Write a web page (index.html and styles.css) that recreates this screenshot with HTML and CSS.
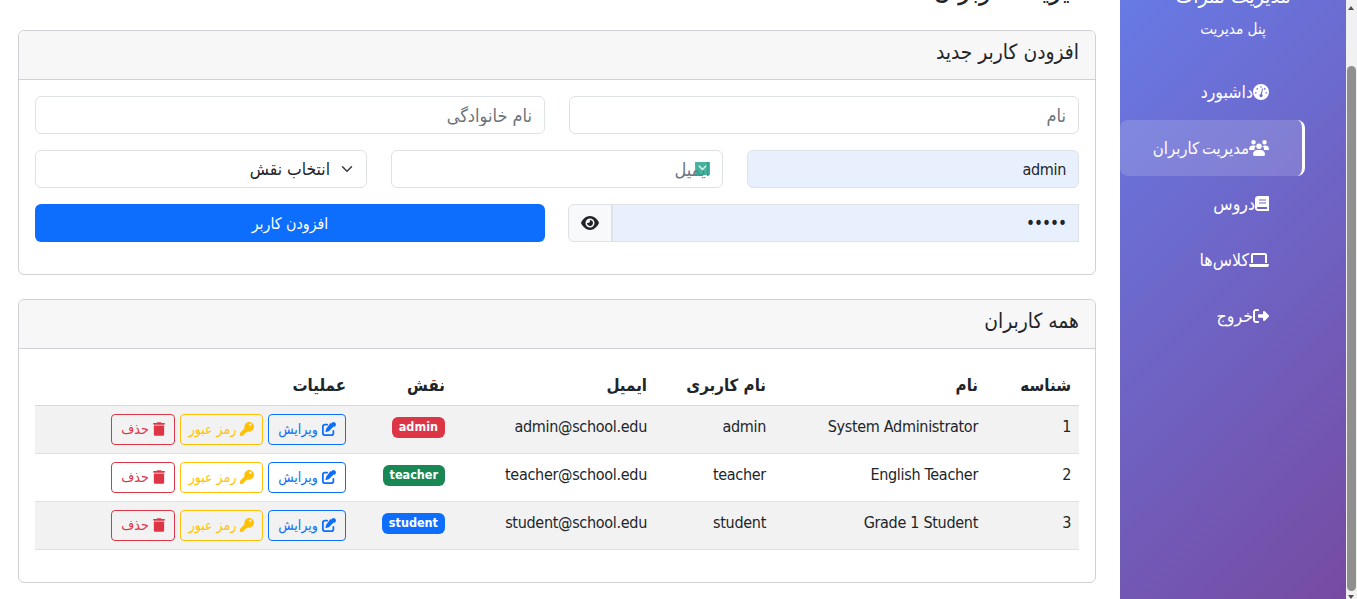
FILE: index.html
```html
<!DOCTYPE html>
<html lang="fa" dir="rtl">
<head>
<meta charset="utf-8">
<title>مدیریت کاربران</title>
<link rel="stylesheet" href="styles.css">
</head>
<body>
<div class="scrollbar"><span class="arrow up"></span><span class="thumb"></span><span class="arrow down"></span></div>
<div class="app">
  <aside class="sidebar">
    <div class="brand"><h4>مدیریت نمرات</h4><p>پنل مدیریت</p></div>
    <nav class="nav">
      <a class="nav-item"><svg class="ni" viewBox="0 0 512 512"><path fill="#fff" fill-rule="evenodd" d="M256 0a256 256 0 1 0 0 512 256 256 0 0 0 0-512zm0 70a26 26 0 1 1 0 52 26 26 0 0 1 0-52zM136 130a26 26 0 1 1 0 52 26 26 0 0 1 0-52zm240 0a26 26 0 1 1 0 52 26 26 0 0 1 0-52zM90 256a26 26 0 1 1 0 52 26 26 0 0 1 0-52zm332 0a26 26 0 1 1 0 52 26 26 0 0 1 0-52zM316 150l-28 176a50 50 0 1 1-40-8l44-172c6-18 28-14 24 4z"/></svg><span>داشبورد</span></a>
      <a class="nav-item active"><svg class="ni wide" viewBox="0 0 640 512"><path fill="#fff" d="M144 0a72 72 0 1 1 0 144 72 72 0 0 1 0-144zm352 0a72 72 0 1 1 0 144 72 72 0 0 1 0-144zM320 112a88 88 0 1 1 0 176 88 88 0 0 1 0-176zM0 288c0-62 50-112 112-112h48c22 0 42 6 60 16-26 24-44 60-44 96 0 12 2 22 4 32H16c-9 0-16-7-16-16zm480 0c0-36-18-72-44-96 18-10 38-16 60-16h32c62 0 112 50 112 112v16c0 9-7 16-16 16H476c2-10 4-20 4-32zM128 456c0-74 60-136 136-136h112c76 0 136 62 136 136 0 31-25 56-56 56H184c-31 0-56-25-56-56z"/></svg><span>مدیریت کاربران</span></a>
      <a class="nav-item"><svg class="ni narrow" viewBox="0 0 448 512"><path fill="#fff" fill-rule="evenodd" d="M96 0h320c18 0 32 14 32 32v448H96c-53 0-96-43-96-96V96C0 43 43 0 96 0zm32 112v32h224v-32H128zm0 96v32h224v-32H128zM64 384c0 18 14 32 32 32h288v-64H96c-18 0-32 14-32 32z"/></svg><span>دروس</span></a>
      <a class="nav-item"><svg class="ni wide" viewBox="0 0 640 512"><path fill="#fff" fill-rule="evenodd" d="M128 32h384c35 0 64 29 64 64v256h-64V96H128v256H64V96c0-35 29-64 64-64zM20 384h600c11 0 20 9 20 20 0 42-34 76-76 76H76c-42 0-76-34-76-76 0-11 9-20 20-20z"/></svg><span>کلاس‌ها</span></a>
      <a class="nav-item"><svg class="ni" viewBox="0 0 512 512"><path fill="#fff" d="M160 96H96c-18 0-32 14-32 32v256c0 18 14 32 32 32h64c18 0 32 14 32 32s-14 32-32 32H96c-53 0-96-43-96-96V128C0 75 43 32 96 32h64c18 0 32 14 32 32s-14 32-32 32zm344 137c12 13 12 33 0 46L376 407c-9 9-23 12-35 7s-20-17-20-30v-72H192c-18 0-32-14-32-32v-48c0-18 14-32 32-32h129v-72c0-13 8-25 20-30s26-2 35 7z"/></svg><span>خروج</span></a>
    </nav>
  </aside>
  <main class="content">
    <h2 class="page-title">مدیریت کاربران</h2>
    <section class="card">
      <div class="card-header">افزودن کاربر جدید</div>
      <div class="card-body add-form">
        <div class="row two">
          <input class="field" placeholder="نام">
          <input class="field" placeholder="نام خانوادگی">
        </div>
        <div class="row three">
          <input class="field filled latin" value="admin">
          <div class="email-wrap"><input class="field" placeholder="ایمیل"><svg class="autofill" viewBox="0 0 16 14"><rect width="16" height="14" fill="#2aa58f"/><path d="M4 4l4 4 4-4" fill="none" stroke="#d8f2ec" stroke-width="1.6"/></svg></div>
          <div class="select"><span>انتخاب نقش</span><svg class="chev" viewBox="0 0 16 16"><path d="M2 5l6 6 6-6" fill="none" stroke="#343a40" stroke-width="2" stroke-linecap="round" stroke-linejoin="round"/></svg></div>
        </div>
        <div class="row two">
          <div class="pw-group">
            <input class="field filled pw" type="password" value="admin">
            <button class="eye"><svg viewBox="0 0 576 512"><path fill="#212529" fill-rule="evenodd" d="M288 32C208 32 143 68 97 112 51 154 20 204 5 240c-3 8-3 16 0 24 15 36 46 86 92 128 46 44 111 88 191 88s145-44 191-88c46-42 77-92 92-128 3-8 3-16 0-24-15-36-46-86-92-128C433 68 368 32 288 32zM144 256a144 144 0 1 1 288 0 144 144 0 0 1-288 0zm144-64c0 35-29 64-64 64-7 0-14-1-20-3-6-2-12 1-12 7 1 7 2 14 4 21 14 51 66 81 117 68s81-66 68-117c-11-42-48-69-89-71-6 0-9 6-7 12 2 6 3 12 3 19z"/></svg></button>
          </div>
          <button class="btn-add">افزودن کاربر</button>
        </div>
      </div>
    </section>
    <section class="card">
      <div class="card-header">همه کاربران</div>
      <div class="card-body list">
        <table class="users">
          <thead>
            <tr><th class="c-id">شناسه</th><th class="c-name">نام</th><th class="c-user">نام کاربری</th><th class="c-mail">ایمیل</th><th class="c-role">نقش</th><th>عملیات</th></tr>
          </thead>
          <tbody>
            <tr class="odd"><td>1</td><td>System Administrator</td><td>admin</td><td>admin@school.edu</td><td><span class="badge red">admin</span></td><td class="ops"><a class="b blue"><svg class="i" viewBox="0 0 512 512"><use href="#edit"/></svg>ویرایش</a><a class="b amber"><svg class="i" viewBox="0 0 512 512"><use href="#key"/></svg>رمز عبور</a><a class="b danger"><svg class="i t" viewBox="0 0 448 512"><use href="#trash"/></svg>حذف</a></td></tr>
            <tr><td>2</td><td>English Teacher</td><td>teacher</td><td>teacher@school.edu</td><td><span class="badge green">teacher</span></td><td class="ops"><a class="b blue"><svg class="i" viewBox="0 0 512 512"><use href="#edit"/></svg>ویرایش</a><a class="b amber"><svg class="i" viewBox="0 0 512 512"><use href="#key"/></svg>رمز عبور</a><a class="b danger"><svg class="i t" viewBox="0 0 448 512"><use href="#trash"/></svg>حذف</a></td></tr>
            <tr class="odd"><td>3</td><td>Grade 1 Student</td><td>student</td><td>student@school.edu</td><td><span class="badge bluebg">student</span></td><td class="ops"><a class="b blue"><svg class="i" viewBox="0 0 512 512"><use href="#edit"/></svg>ویرایش</a><a class="b amber"><svg class="i" viewBox="0 0 512 512"><use href="#key"/></svg>رمز عبور</a><a class="b danger"><svg class="i t" viewBox="0 0 448 512"><use href="#trash"/></svg>حذف</a></td></tr>
          </tbody>
        </table>
      </div>
    </section>
  </main>
</div>
<svg class="defs" aria-hidden="true"><defs>
<path id="edit" fill="currentColor" d="M471 22c-28-28-73-28-101 0l-38 38 120 120 38-38c28-28 28-73 0-101zM172 220c-7 7-13 16-16 26l-28 86c-3 8-1 17 6 24s16 9 24 6l86-28c10-3 19-9 26-16l160-160-120-120zM96 64C43 64 0 107 0 160v256c0 53 43 96 96 96h256c53 0 96-43 96-96v-96c0-18-14-32-32-32s-32 14-32 32v96c0 18-14 32-32 32H96c-18 0-32-14-32-32V160c0-18 14-32 32-32h96c18 0 32-14 32-32s-14-32-32-32z"/>
<path id="key" fill="currentColor" fill-rule="evenodd" d="M336 352c97 0 176-79 176-176S433 0 336 0 160 79 160 176c0 19 3 37 8 54L7 391c-4 4-7 10-7 17v80c0 13 11 24 24 24h80c13 0 24-11 24-24v-40h40c13 0 24-11 24-24v-40h40c6 0 12-3 17-7l33-33c17 5 35 8 54 8zm40-216a40 40 0 1 1 0-80 40 40 0 0 1 0 80z"/>
<path id="trash" fill="currentColor" d="M135 18C140 7 151 0 164 0h120c13 0 24 7 29 18l7 14h96c18 0 32 14 32 32s-14 32-32 32H32C14 96 0 82 0 64s14-32 32-32h96zM32 128h384v320c0 35-29 64-64 64H96c-35 0-64-29-64-64z"/>
</defs></svg>
</body>
</html>
```
FILE: styles.css
```css
* { box-sizing: border-box; }
html, body { margin: 0; height: 599px; overflow: hidden; background: #fff; }
body { font-family: "DejaVu Sans Condensed", "DejaVu Sans", sans-serif; font-size: 16px; color: #212529; position: relative; }
.defs { display: none; }
.app { display: flex; direction: rtl; height: 599px; padding-right: 11px; overflow: hidden; }
.scrollbar { position: absolute; right: 0; top: 0; bottom: 0; width: 11px; background: #f1f1f1; }
.thumb { position: absolute; left: 1px; right: 1px; top: 66px; height: 525px; background: #8f8f8f; border-radius: 5px; }
.arrow { position: absolute; left: 2px; width: 0; height: 0; border-left: 3.5px solid transparent; border-right: 3.5px solid transparent; }
.arrow.up { top: 6px; border-bottom: 4px solid #505050; }
.arrow.down { bottom: 0; border-top: 4px solid #505050; }
.sidebar { width: 226px; flex: none; height: 669px; margin-top: -70px; background: linear-gradient(135deg, #667eea, #764ba2); color: #fff; }
.brand { text-align: center; padding-top: 54px; height: 128px; }
.brand h4 { margin: 0; font-size: 21px; font-weight: 500; line-height: 24px; }
.brand p { margin: 11px 0 0; font-size: 15.2px; line-height: 20px; }
.nav { display: flex; flex-direction: column; margin-top: 6px; }
.nav-item { display: flex; align-items: center; align-self: flex-end; height: 56px; width: 185px; padding: 0 36px 0 0; color: #fff; font-size: 17.6px; }
.nav-item.active { background: rgba(255,255,255,.15); border-right: 3px solid #fff; border-radius: 8px; padding-right: 33px; }
.nav-item.active span { word-spacing: -2px; font-size: 16.6px; }
.ni { width: 16px; height: 16px; flex: none; }
.ni.wide { width: 20px; }
.ni.narrow { width: 14px; }
.content { flex: 1; min-width: 0; margin-top: -70px; padding: 0 24px 0 18px; }
.page-title { margin: 0; height: 100px; padding-top: 45px; font-size: 27.5px; font-weight: 500; line-height: 28px; color: #212529; white-space: nowrap; }
.card { border: 1px solid #cfd1d4; border-radius: 6px; background: #fff; margin-bottom: 24px; }
.card-header { height: 49px; padding: 0 16px; background: #f7f7f7; border-bottom: 1px solid #cfd1d4; border-radius: 6px 6px 0 0; font-size: 20.8px; line-height: 42px; }
.card-body { padding: 16px; }
.add-form { height: 194px; display: flex; flex-direction: column; gap: 16px; }
.row { display: grid; gap: 24px; height: 38px; }
.row.two { grid-template-columns: 1fr 1fr; }
.row.three { grid-template-columns: 1fr 1fr 1fr; }
.field { display: block; width: 100%; height: 38px; border: 1px solid #dee2e6; border-radius: 6px; background: #fff; padding: 0 12px; font-family: inherit; font-size: 18px; line-height: 34px; color: #212529; text-align: right; direction: rtl; outline: 0; }
.field::placeholder { color: #6c757d; opacity: 1; }
.filled { background: #e8f0fe; }
.latin { font-size: 16px; letter-spacing: -.3px; }
.email-wrap { position: relative; }
.autofill { position: absolute; right: 13px; top: 12px; width: 15px; height: 13px; opacity: .85; }
.select { height: 38px; border: 1px solid #dee2e6; border-radius: 6px; padding: 0 13px; display: flex; align-items: center; flex-direction: row-reverse; justify-content: flex-end; font-size: 17.4px; }
.chev { width: 12px; height: 12px; margin-left: 11px; }
.pw-group { display: flex; }
.pw { flex: 1; min-width: 0; border-radius: 0; font-size: 17px; letter-spacing: -1px; }
.eye { width: 44px; flex: none; height: 38px; border: 1px solid #dee2e6; background: #f8f9fa; border-radius: 6px 0 0 6px; margin-left: -1px; padding: 0; display: flex; align-items: center; justify-content: center; }
.eye svg { width: 18px; height: 16px; }
.btn-add { height: 38px; background: #0d6efd; color: #fff; border: 0; border-radius: 6px; font-family: inherit; font-size: 15.8px; }
.list { height: 233px; padding: 16px; }
.users { width: 100%; border-collapse: collapse; table-layout: fixed; font-size: 16px; letter-spacing: -.3px; }
.users th { height: 40px; padding: 0 8px; text-align: right; font-weight: 700; font-size: 16.8px; letter-spacing: 0; border-bottom: 1px solid #d6d8da; }
.users td { height: 48px; padding: 9px 8px 0; vertical-align: top; line-height: 24px; text-align: right; border-bottom: 1px solid #dee2e6; }
.users .odd td { background: #f2f2f2; }
.c-id { width: 93px; }
.c-name { width: 212px; }
.c-user { width: 119px; }
.c-mail { width: 202px; }
.c-role { width: 99px; }
.badge { display: inline-block; height: 21px; padding: 0 7px; line-height: 20px; border-radius: 6px; color: #fff; font-size: 12.5px; font-weight: 700; letter-spacing: 0; vertical-align: 1px; }
.red { background: #dc3545; }
.green { background: #198754; }
.bluebg { background: #0d6efd; }
.users td.ops { white-space: nowrap; font-size: 0; padding-top: 8px; letter-spacing: 0; }
.b { display: inline-flex; align-items: center; justify-content: center; gap: 4px; height: 31px; border: 1px solid; border-radius: 4px; font-size: 14px; margin-left: 5px; vertical-align: top; }
.b.blue { width: 78px; }
.b.amber { width: 83px; }
.b.danger { width: 64px; }
.i { width: 14px; height: 14px; flex: none; }
.i.t { width: 12px; }
.blue { color: #0d6efd; border-color: #0d6efd; }
.amber { color: #ffc107; border-color: #ffc107; }
.danger { color: #dc3545; border-color: #dc3545; }
```
